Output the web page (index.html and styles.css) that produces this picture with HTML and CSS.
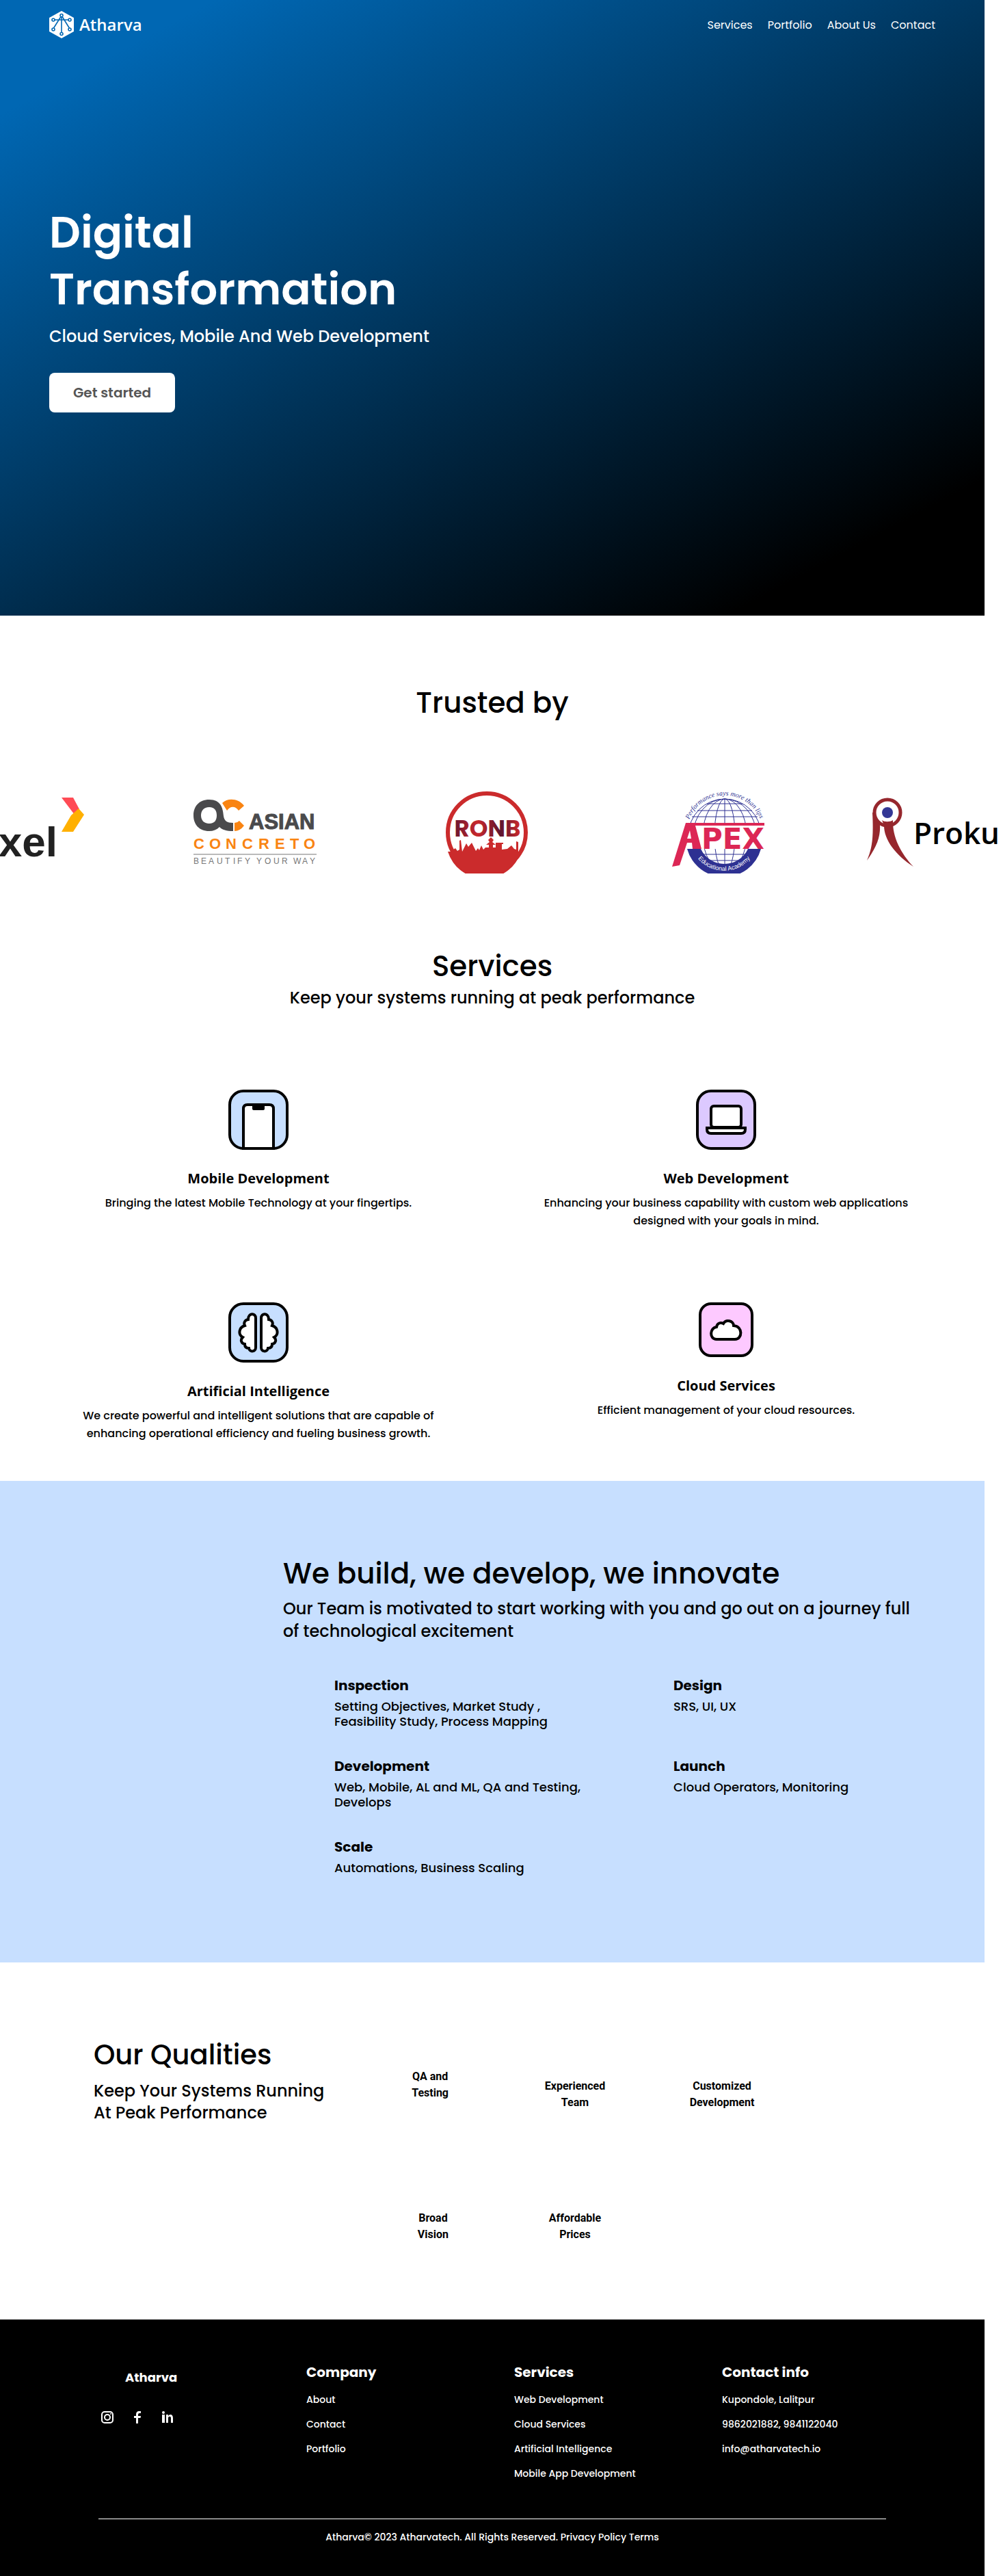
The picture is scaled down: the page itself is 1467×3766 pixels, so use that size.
FILE: index.html
```html
<!DOCTYPE html>
<html lang="en">
<head>
<meta charset="utf-8">
<meta name="viewport" content="width=device-width, initial-scale=1">
<title>Atharva</title>
<link rel="stylesheet" href="styles.css">
</head>
<body>
<div class="page">
  <div class="hero">
    <header class="header">
      <a class="brand" href="#">
        <svg class="brand-mark" viewBox="0 0 36 40" aria-hidden="true">
          <path d="M18 0l18 10v20L18 40 0 30V10z" fill="#fff"/>
          <g fill="none" stroke="#0067b3" stroke-width="1.6">
            <path d="M18 9v23M16.600 9L6.500 25M19.400 9l10 16M7.500 13h21"/>
            <g fill="#fff">
              <circle cx="18" cy="6.500" r="2"/><circle cx="6" cy="13" r="2"/><circle cx="30" cy="13" r="2"/>
              <circle cx="6" cy="27" r="2"/><circle cx="30" cy="27" r="2"/><circle cx="18" cy="33.500" r="2"/>
            </g>
          </g>
        </svg>
        <span>Atharva</span>
      </a>
      <nav class="nav">
        <a href="#services">Services</a>
        <a href="#portfolio">Portfolio</a>
        <a href="#about">About Us</a>
        <a href="#contact">Contact</a>
      </nav>
    </header>
    <div class="hero-body">
      <h1>Digital<br>Transformation</h1>
      <p class="hero-lead">Cloud Services, Mobile And Web Development</p>
      <button class="cta" type="button">Get started</button>
    </div>
  </div>

  <section class="trusted" id="portfolio">
    <h2>Trusted by</h2>
    <div class="clients">
      <div class="client">
        <svg width="180" height="120" viewBox="0 0 180 120" role="img" aria-label="Exel">
          <text x="140" y="95" text-anchor="end" class="exel-name">xel</text>
          <path d="M146 9h17l9 17-7 8z" fill="#ff4b55"/>
          <path d="M171 25l8 9-16 25h-17l14-24z" fill="#ffb000"/>
        </svg>
      </div>
      <div class="client">
        <svg width="180" height="120" viewBox="0 0 180 120" role="img" aria-label="Asian Concreto">
          <path d="M42 17C50 9 66 10 74 21l-8 7c-5-7-12-7-17 0z" fill="#f98412"/>
          <path d="M60 46q4 0 7-3l7 7q-6 8-14 8z" fill="#f98412"/>
          <path d="M23 12c17 0 20 12 21 24 1 7 5 10 14 10v12c-10 0-16-2-20-6-4 4-9 6-15 6C8 58 0 48 0 35s8-23 23-23zm0 11c-8 0-12 5-12 12s4 12 12 12 11-5 11-12-3-12-11-12z" fill="#4a4a4c" fill-rule="evenodd"/>
          <text x="81" y="55" class="asian-name">ASIAN</text>
          <text x="0 23 47 71 95 119 141 161" y="84" class="asian-sub">CONCRETO</text>
          <path d="M0 92h180" stroke="#777"/>
          <text x="0 11 22 34 46 58 64 75 84 92 104 117 129 138 146 159 170" y="106" class="asian-tag">BEAUTIFY YOUR WAY</text>
        </svg>
      </div>
      <div class="client">
        <svg width="120" height="120" viewBox="0 0 120 120" role="img" aria-label="RONB">
          <defs>
            <linearGradient id="ronb" x1="0" x2="1"><stop offset="0" stop-color="#6b1630"/><stop offset=".35" stop-color="#c9282c"/><stop offset=".7" stop-color="#5c1430"/><stop offset="1" stop-color="#d12a2c"/></linearGradient>
          </defs>
          <circle cx="60" cy="60" r="57" fill="#fff" stroke="#cb2b2c" stroke-width="6"/>
          <path d="M7 88l7-5 3 4 3-2V72l2-1 2 17 6-12 3 5 5-6 6 12 3-4 2 3 3-7 3 6 3-3h5v-4h-4l5-4-2-3 4-4 4 4-2 3 5 4h-4v4h4v-7h11v2h-2v8l8-1 6-5 4 5 3 1V73l3 1v14h4a56 56 0 0 1-107 0z" fill="#cb2b2c"/>
          <text x="61" y="66" text-anchor="middle" class="ronb-name" fill="url(#ronb)">RONB</text>
        </svg>
      </div>
      <div class="client">
        <svg width="136" height="120" viewBox="0 0 136 120" role="img" aria-label="Apex Educational Academy">
          <defs>
            <path id="apex-top" d="M25 41a56 56 0 0 1 104 0"/>
            <path id="apex-bottom" d="M36 96a50 50 0 0 0 80 0"/>
          </defs>
          <g fill="none" stroke="#2e3192" stroke-width="1">
            <circle cx="77" cy="64" r="53"/>
            <ellipse cx="77" cy="64" rx="46" ry="53"/><ellipse cx="77" cy="64" rx="32" ry="53"/><ellipse cx="77" cy="64" rx="15" ry="53"/>
            <path d="M77 11v100M51 18h52M37 28h80M29 37h96M38 92h78M48 101h58"/>
          </g>
          <path d="M22 84a56 56 0 0 0 108 0h-19a38 38 0 0 1-69 0z" fill="#2e3192"/>
          <path d="M18 50h118v34H18z" fill="#fff"/>
          <path d="M20 46h115v4H34l9 34H30l-1-9h-7l-11 33-11 2zm6 11l-4 12h6z" fill="#dc2755" fill-rule="evenodd"/>
          <text x="43" y="84" class="apex-name">PEX</text>
          <text class="apex-top"><textPath href="#apex-top">Performance says more than lips</textPath></text>
          <text class="apex-bottom" text-anchor="middle"><textPath href="#apex-bottom" startOffset="50%">Educational Academy</textPath></text>
        </svg>
      </div>
      <div class="client">
        <svg width="244" height="120" viewBox="0 0 244 120" role="img" aria-label="Prokura">
          <circle cx="30" cy="31" r="19" fill="none" stroke="#96272d" stroke-width="5"/>
          <circle cx="30" cy="31" r="8" fill="#333795"/>
          <path d="M8 31c2 40-1 53-8 70 15-21 20-35 19-53-6-4-8-10-8-17z" fill="#96272d"/>
          <path d="M22 42c3 3 12 3 16 0-1 25 12 49 30 68-26-17-43-39-43-60z" fill="#96272d"/>
          <text x="68" y="77" class="prokura-name">Proku</text>
        </svg>
      </div>
    </div>
  </section>

  <section class="services" id="services">
    <h2>Services</h2>
    <p class="lead">Keep your systems running at peak performance</p>
    <div class="service-grid">
      <article class="service">
        <svg width="88" height="88" viewBox="0 0 88 88" aria-hidden="true">
          <rect x="2" y="2" width="84" height="84" rx="20" fill="#c7dfff" stroke="#000" stroke-width="4"/>
          <path d="M22 86V28q0-6 6-6h32q6 0 6 6v58z" fill="#fff" stroke="#000" stroke-width="4"/>
          <path d="M35 22h18v6q0 2-2 2H37q-2 0-2-2z"/>
        </svg>
        <h3>Mobile Development</h3>
        <p>Bringing the latest Mobile Technology at your fingertips.</p>
      </article>
      <article class="service">
        <svg width="88" height="88" viewBox="0 0 88 88" aria-hidden="true">
          <rect x="2" y="2" width="84" height="84" rx="20" fill="#dcc9ff" stroke="#000" stroke-width="4"/>
          <g fill="#fff" stroke="#000" stroke-width="4">
            <rect x="22" y="24" width="44" height="31" rx="4"/>
            <path d="M16 56h56v2q0 6-6 6H22q-6 0-6-6z"/>
          </g>
        </svg>
        <h3>Web Development</h3>
        <p>Enhancing your business capability with custom web applications designed with your goals in mind.</p>
      </article>
      <article class="service">
        <svg width="88" height="88" viewBox="0 0 88 88" aria-hidden="true">
          <rect x="2" y="2" width="84" height="84" rx="20" fill="#c7dfff" stroke="#000" stroke-width="4"/>
          <g fill="#fff" stroke="#000" stroke-width="4">
            <path d="M40 23c0-8-11-8-11 2-5 1-7 5-5 9-9 3-10 13-3 17-4 4-2 9 3 10 0 4 2 6 6 6 1 6 10 6 10-1z"/>
            <path d="M48 23c0-8 11-8 11 2 5 1 7 5 5 9 9 3 10 13 3 17 4 4 2 9-3 10 0 4-2 6-6 6-1 6-10 6-10-1z"/>
          </g>
        </svg>
        <h3>Artificial Intelligence</h3>
        <p>We create powerful and intelligent solutions that are capable of enhancing operational efficiency and fueling business growth.</p>
      </article>
      <article class="service">
        <svg width="80" height="80" viewBox="0 0 80 80" aria-hidden="true">
          <rect x="2" y="2" width="76" height="76" rx="16" fill="#fdc9ff" stroke="#000" stroke-width="4"/>
          <path d="M26 54c-11 0-10-17 0-18 1-6 6-7 10-5 4-7 15-4 15 3 14 1 13 20 2 20z" fill="#fff" stroke="#000" stroke-width="4"/>
        </svg>
        <h3>Cloud Services</h3>
        <p>Efficient management of your cloud resources.</p>
      </article>
    </div>
  </section>

  <section class="process" id="about">
    <h2>We build, we develop, we innovate</h2>
    <p class="lead">Our Team is motivated to start working with you and go out on a journey full of technological excitement</p>
    <div class="steps">
      <div><h3>Inspection</h3><p>Setting Objectives, Market Study ,<br>Feasibility Study, Process Mapping</p></div>
      <div><h3>Design</h3><p>SRS, UI, UX</p></div>
      <div><h3>Development</h3><p>Web, Mobile, AL and ML, QA and Testing,<br>Develops</p></div>
      <div><h3>Launch</h3><p>Cloud Operators, Monitoring</p></div>
      <div><h3>Scale</h3><p>Automations, Business Scaling</p></div>
    </div>
  </section>

  <section class="qualities">
    <div class="qualities-intro">
      <h2>Our Qualities</h2>
      <p class="lead">Keep Your Systems Running<br>At Peak Performance</p>
    </div>
    <ul class="quality-grid">
      <li class="raised">QA and<br>Testing</li>
      <li>Experienced<br>Team</li>
      <li>Customized<br>Development</li>
      <li>Broad<br>Vision</li>
      <li>Affordable<br>Prices</li>
    </ul>
  </section>

  <footer class="footer" id="contact">
    <div class="footer-grid">
      <div class="footer-brand">
        <h3>Atharva</h3>
        <div class="social">
          <a href="#" aria-label="Instagram"><svg width="20" height="20" viewBox="0 0 20 20" fill="none" stroke="#fff" stroke-width="2"><rect x="2" y="2" width="16" height="16" rx="4"/><circle cx="10" cy="10" r="4"/><circle cx="15" cy="5" r="1" fill="#fff" stroke="none"/></svg></a>
          <a href="#" aria-label="Facebook"><svg width="20" height="20" viewBox="0 0 20 20" fill="#fff"><path d="M8 19v-8H5V8h3V5.500C8 2.500 10 1 12 1h3v3h-2q-2 0-2 2v2h4l-.5 3H11v8z"/></svg></a>
          <a href="#" aria-label="LinkedIn"><svg width="20" height="20" viewBox="0 0 20 20" fill="#fff"><circle cx="4" cy="3" r="2"/><path d="M2 6h4v12H2zM8 6h3v2c2-3 7-3 7 3v7h-3v-7c0-3-4-3-4 0v7H8z"/></svg></a>
        </div>
      </div>
      <div>
        <h3>Company</h3>
        <ul>
          <li><a href="#about">About</a></li>
          <li><a href="#contact">Contact</a></li>
          <li><a href="#portfolio">Portfolio</a></li>
        </ul>
      </div>
      <div>
        <h3>Services</h3>
        <ul>
          <li><a href="#services">Web Development</a></li>
          <li><a href="#services">Cloud Services</a></li>
          <li><a href="#services">Artificial Intelligence</a></li>
          <li><a href="#services">Mobile App Development</a></li>
        </ul>
      </div>
      <div>
        <h3>Contact info</h3>
        <ul>
          <li>Kupondole, Lalitpur</li>
          <li>9862021882, 9841122040</li>
          <li><a href="mailto:info@atharvatech.io">info@atharvatech.io</a></li>
        </ul>
      </div>
    </div>
    <p class="copyright">Atharva© 2023 Atharvatech. All Rights Reserved. Privacy Policy Terms</p>
  </footer>
</div>
</body>
</html>
```
FILE: styles.css
```css
* {
  box-sizing: border-box;
}

body {
  margin: 0;
  background: #fff;
  color: #000;
  font-family: Poppins, Inter, "Open Sans", sans-serif;
  font-size: 16px;
  font-weight: 500;
}

h1, h2, h3, p, ul {
  margin: 0;
  padding: 0;
}

ul {
  list-style: none;
}

a {
  color: inherit;
  text-decoration: none;
}

svg {
  display: block;
}

h2 {
  font-size: 42px;
  line-height: 50px;
  font-weight: 500;
}

.page {
  margin-right: 27px;
}

.lead {
  font-size: 24px;
}

/* Hero */
.hero {
  display: flex;
  flex-direction: column;
  min-height: 900px;
  background: linear-gradient(152deg, #0067b3 10%, #000 88%);
  color: #fff;
}

.header {
  display: flex;
  align-items: center;
  justify-content: space-between;
  height: 72px;
  padding: 0 72px;
}

.brand {
  display: flex;
  align-items: center;
  gap: 8px;
  font: 600 24px/32px "Open Sans", sans-serif;
}

.brand-mark {
  width: 36px;
  height: 40px;
}

.nav {
  display: flex;
  gap: 22px;
  font-size: 16px;
  font-weight: 400;
}

.hero-body {
  flex: 1;
  display: flex;
  flex-direction: column;
  align-items: flex-start;
  justify-content: center;
  padding: 0 72px 72px;
}

h1 {
  font-size: 64px;
  line-height: 83px;
  font-weight: 600;
}

.hero-lead {
  margin-top: 10px;
  font-size: 24px;
  line-height: 36px;
}

.cta {
  margin-top: 35px;
  padding: 17px 35px;
  border: 0;
  border-radius: 8px;
  background: #fff;
  color: #555;
  font: inherit;
  font-size: 20px;
  line-height: 24px;
  font-weight: 600;
}

/* Clients */
.trusted {
  padding-top: 103px;
  text-align: center;
}

.clients {
  display: flex;
  justify-content: center;
  margin: 104px -27px 0 0;
  padding-right: 43px;
  overflow: hidden;
}

.client {
  display: flex;
  flex: 0 0 339px;
  justify-content: center;
}

.client svg {
  flex: none;
}

.exel-name {
  font: 700 62px "Liberation Sans", sans-serif;
  fill: #222;
}

.asian-name {
  font: 700 31px "Liberation Sans", sans-serif;
  fill: #4a4a4c;
  stroke: #4a4a4c;
}

.asian-sub {
  font: 700 22px "Liberation Sans", sans-serif;
  fill: #f98412;
}

.asian-tag {
  font: 400 12px "Liberation Sans", sans-serif;
  fill: #777;
}

.ronb-name {
  font: 700 34px Poppins, Inter, sans-serif;
}

.apex-name {
  font: 700 42px "DejaVu Sans", sans-serif;
  fill: #dc2755;
}

.apex-top {
  font: italic 400 10px "Liberation Serif", serif;
  fill: #2e3192;
}

.apex-bottom {
  font: 400 9px "Liberation Sans", sans-serif;
  fill: #fff;
}

.prokura-name {
  font: 600 44px "Open Sans", sans-serif;
}

/* Services */
.services {
  padding: 111px 36px 56px;
  text-align: center;
}

.services .lead {
  margin-top: 5px;
  line-height: 32px;
}

.service-grid {
  display: grid;
  grid-template-columns: 1fr 1fr;
  row-gap: 106px;
  margin-top: 118px;
}

.service {
  display: flex;
  flex-direction: column;
  align-items: center;
}

.service h3 {
  margin-top: 28px;
  font: 700 20px/28px "Open Sans", sans-serif;
}

.service p {
  max-width: 550px;
  margin-top: 9px;
  line-height: 26px;
}

/* Process */
.process {
  padding: 111px 72px 127px 414px;
  background: #c7dfff;
}

.process .lead {
  max-width: 940px;
  margin-top: 9px;
  line-height: 33px;
}

.steps {
  display: grid;
  grid-template-columns: 496px 1fr;
  row-gap: 42px;
  margin-top: 51px;
  padding-left: 75px;
}

.steps h3 {
  font-size: 20px;
  line-height: 24px;
  font-weight: 700;
}

.steps p {
  margin-top: 8px;
  font-size: 18px;
  line-height: 22px;
}

/* Qualities */
.qualities {
  display: flex;
  gap: 60px;
  padding: 110px 137px 112px;
}

.qualities-intro {
  flex: 0 0 341px;
}

.qualities h2 {
  font-size: 40px;
}

.qualities .lead {
  margin-top: 12px;
  line-height: 32px;
}

.quality-grid {
  display: grid;
  grid-template-columns: 118px 370px 60px;
  row-gap: 145px;
  justify-items: center;
  margin-top: 59px;
  font: 700 16px/24px Roboto, sans-serif;
  text-align: center;
}

.quality-grid li:nth-child(3n + 1) {
  justify-self: end;
}

.quality-grid .raised {
  margin-top: -14px;
}

/* Footer */
.footer {
  padding: 63px 144px 45px;
  background: #000;
  color: #fff;
  font-size: 14px;
  line-height: 24px;
}

.footer-grid {
  display: grid;
  grid-template-columns: repeat(3, 304px) 1fr;
  padding-bottom: 54px;
  border-bottom: 1px solid #fff;
}

.footer h3 {
  font-size: 20px;
  line-height: 28px;
  font-weight: 700;
}

.footer ul {
  display: grid;
  gap: 12px;
  align-content: start;
  margin-top: 14px;
}

.footer-brand {
  padding-top: 10px;
}

.footer-brand h3 {
  padding-left: 39px;
  font-size: 18px;
  line-height: 24px;
}

.social {
  display: flex;
  gap: 24px;
  margin-top: 36px;
  padding-left: 3px;
}

.copyright {
  margin-top: 14px;
  text-align: center;
}
```
